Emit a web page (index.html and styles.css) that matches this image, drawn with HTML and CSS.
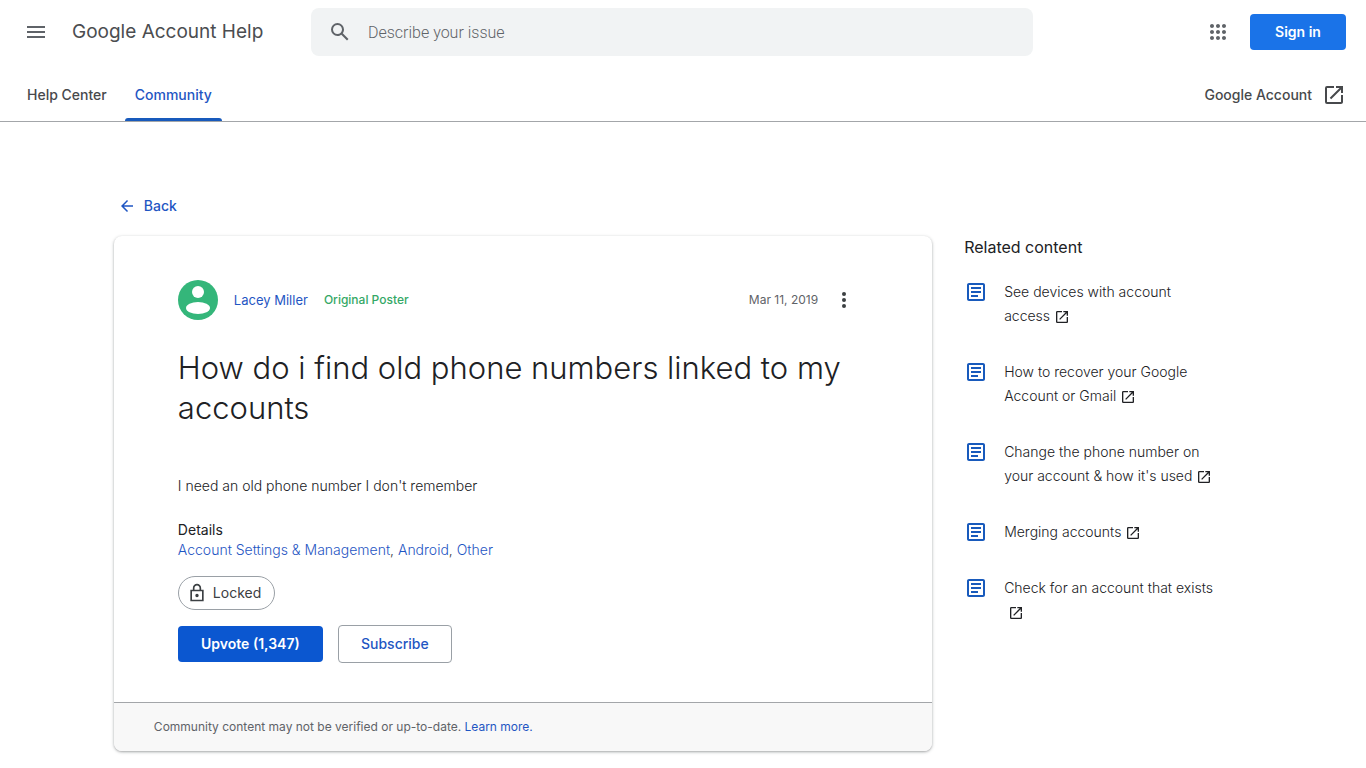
FILE: index.html
```html
<!DOCTYPE html>
<html lang="en">
<head>
    <meta charset="UTF-8">
    <meta name="viewport" content="width=device-width, initial-scale=1.0">
    <title>How do i find old phone numbers linked to my accounts - Google Account Community</title>
    <link rel="stylesheet" href="styles.css">
</head>
<body>
    <!-- Shared icons -->
    <svg class="sprite" aria-hidden="true">
        <symbol id="icon-open" viewBox="0 0 24 24">
            <path d="M19 19H5V5h7V3H5a2 2 0 0 0-2 2v14a2 2 0 0 0 2 2h14c1.1 0 2-.9 2-2v-7h-2v7zM14 3v2h3.590l-9.830 9.830 1.410 1.410L19 6.410V10h2V3h-7z"/>
        </symbol>
        <symbol id="icon-article" viewBox="0 0 24 24">
            <path d="M19 5v14H5V5h14m0-2H5c-1.100 0-2 .9-2 2v14c0 1.100.9 2 2 2h14c1.100 0 2-.9 2-2V5c0-1.100-.9-2-2-2zM14 17H7v-2h7v2zm3-4H7v-2h10v2zm0-4H7V7h10v2z"/>
        </symbol>
    </svg>

    <header class="header">
        <div class="top-bar">
            <div class="brand">
                <button class="icon-btn" aria-label="Main menu">
                    <svg viewBox="0 0 24 24" width="24" height="24"><path d="M3 18h18v-2H3v2zm0-5h18v-2H3v2zm0-7v2h18V6H3z"/></svg>
                </button>
                <a class="brand-name" href="#">Google Account Help</a>
            </div>
            <form class="search">
                <button class="icon-btn" type="button" aria-label="Search">
                    <svg viewBox="0 0 24 24" width="24" height="24"><path d="M20.490 19l-5.730-5.730C15.530 12.200 16 10.910 16 9.500A6.500 6.500 0 1 0 9.500 16c1.410 0 2.700-.47 3.770-1.240L19 20.490 20.490 19zM5 9.500C5 7.010 7.010 5 9.500 5S14 7.010 14 9.500 11.990 14 9.500 14 5 11.990 5 9.500z"/></svg>
                </button>
                <input type="text" placeholder="Describe your issue" aria-label="Describe your issue">
            </form>
            <div class="account">
                <button class="icon-btn" aria-label="Google apps">
                    <svg viewBox="0 0 24 24" width="24" height="24"><path d="M6 8c1.100 0 2-.9 2-2s-.9-2-2-2-2 .9-2 2 .9 2 2 2zm6 12c1.100 0 2-.9 2-2s-.9-2-2-2-2 .9-2 2 .9 2 2 2zm-6 0c1.100 0 2-.9 2-2s-.9-2-2-2-2 .9-2 2 .9 2 2 2zm0-6c1.100 0 2-.9 2-2s-.9-2-2-2-2 .9-2 2 .9 2 2 2zm6 0c1.100 0 2-.9 2-2s-.9-2-2-2-2 .9-2 2 .9 2 2 2zm4-8c0 1.100.9 2 2 2s2-.9 2-2-.9-2-2-2-2 .9-2 2zm-4 2c1.100 0 2-.9 2-2s-.9-2-2-2-2 .9-2 2 .9 2 2 2zm6 6c1.100 0 2-.9 2-2s-.9-2-2-2-2 .9-2 2 .9 2 2 2zm0 6c1.100 0 2-.9 2-2s-.9-2-2-2-2 .9-2 2 .9 2 2 2z"/></svg>
                </button>
                <a class="btn btn-signin" href="#">Sign in</a>
            </div>
        </div>
        <nav class="tabs">
            <a class="tab" href="#">Help Center</a>
            <a class="tab active" href="#">Community</a>
            <a class="tab tab-external" href="#">Google Account <svg width="24" height="24"><use href="#icon-open"/></svg></a>
        </nav>
    </header>

    <main class="page">
        <a class="back" href="#">
            <svg viewBox="0 0 24 24" width="18" height="18"><path d="M20 11H7.830l5.590-5.590L12 4l-8 8 8 8 1.410-1.410L7.830 13H20v-2z"/></svg>
            Back
        </a>

        <div class="columns">
            <article class="card">
                <div class="thread">
                    <div class="author">
                        <svg class="avatar" viewBox="0 0 40 40" width="40" height="40">
                            <circle class="avatar-bg" cx="20" cy="20" r="20"/>
                            <circle cx="20" cy="12" r="6"/>
                            <ellipse cx="20" cy="28" rx="12" ry="6"/>
                        </svg>
                        <a class="author-name" href="#">Lacey Miller</a>
                        <span class="author-role">Original Poster</span>
                        <span class="date">Mar 11, 2019</span>
                        <button class="icon-btn" aria-label="More options">
                            <svg viewBox="0 0 24 24" width="24" height="24"><circle cx="12" cy="6" r="2"/><circle cx="12" cy="12" r="2"/><circle cx="12" cy="18" r="2"/></svg>
                        </button>
                    </div>

                    <h1>How do i find old phone numbers linked to my accounts</h1>
                    <p class="message">I need an old phone number I don't remember</p>

                    <div class="details">
                        <div class="details-title">Details</div>
                        <div class="details-links"><a href="#">Account Settings &amp; Management</a>, <a href="#">Android</a>, <a href="#">Other</a></div>
                    </div>

                    <div class="chip">
                        <svg viewBox="0 0 24 24" width="20" height="20"><path d="M18 8h-1V6c0-2.760-2.240-5-5-5S7 3.240 7 6v2H4v14h16V8h-2zM9 6c0-1.660 1.340-3 3-3s3 1.340 3 3v2H9V6zm9 14H6V10h12v10zm-6-3c1.100 0 2-.9 2-2s-.9-2-2-2-2 .9-2 2 .9 2 2 2z"/></svg>
                        Locked
                    </div>

                    <div class="actions">
                        <button class="btn btn-upvote">Upvote (1,347)</button>
                        <button class="btn btn-subscribe">Subscribe</button>
                    </div>
                </div>
                <div class="notice">Community content may not be verified or up-to-date. <a href="#">Learn more.</a></div>
            </article>

            <aside class="related">
                <h2>Related content</h2>
                <ul>
                    <li>
                        <svg class="article-icon" width="24" height="24"><use href="#icon-article"/></svg>
                        <a href="#">See devices with account access<svg class="open-icon" width="16" height="16"><use href="#icon-open"/></svg></a>
                    </li>
                    <li>
                        <svg class="article-icon" width="24" height="24"><use href="#icon-article"/></svg>
                        <a href="#">How to recover your Google Account or Gmail<svg class="open-icon" width="16" height="16"><use href="#icon-open"/></svg></a>
                    </li>
                    <li>
                        <svg class="article-icon" width="24" height="24"><use href="#icon-article"/></svg>
                        <a href="#">Change the phone number on your account &amp; how it's used<svg class="open-icon" width="16" height="16"><use href="#icon-open"/></svg></a>
                    </li>
                    <li>
                        <svg class="article-icon" width="24" height="24"><use href="#icon-article"/></svg>
                        <a href="#">Merging accounts<svg class="open-icon" width="16" height="16"><use href="#icon-open"/></svg></a>
                    </li>
                    <li>
                        <svg class="article-icon" width="24" height="24"><use href="#icon-article"/></svg>
                        <a href="#">Check for an account that exists<svg class="open-icon" width="16" height="16"><use href="#icon-open"/></svg></a>
                    </li>
                </ul>
            </aside>
        </div>
    </main>
</body>
</html>
```
FILE: styles.css
```css
* {
    box-sizing: border-box;
}
body {
    font-family: Inter, Roboto, sans-serif;
    font-size: 14px;
    line-height: 20px;
    color: #3c4043;
    background-color: #fff;
    margin: 0;
}
a {
    color: #1f56c3;
    text-decoration: none;
}
svg {
    fill: currentColor;
    flex-shrink: 0;
}
button {
    font-family: inherit;
    cursor: pointer;
}
.sprite {
    display: block;
    width: 0;
    height: 0;
}
.icon-btn {
    display: flex;
    padding: 0;
    border: none;
    background: none;
    color: #5f6368;
}

/* Header */
.header {
    border-bottom: 1px solid #a3a6a9;
}
.top-bar {
    display: flex;
    align-items: center;
    height: 64px;
    padding: 0 20px 0 24px;
}
.brand {
    display: flex;
    align-items: center;
    gap: 24px;
    width: 287px;
}
.brand-name {
    font-size: 19px;
    line-height: 24px;
    color: #4b4d50;
    white-space: nowrap;
}
.search {
    display: flex;
    align-items: center;
    flex: 1;
    gap: 16px;
    max-width: 722px;
    height: 48px;
    padding: 0 17px;
    background-color: #f1f3f4;
    border-radius: 8px;
}
.search input {
    flex: 1;
    min-width: 0;
    border: none;
    outline: none;
    padding: 0;
    background: none;
    font-family: Roboto, sans-serif;
    font-size: 16px;
    font-weight: 300;
    color: #202124;
}
.search input::placeholder {
    color: #5f6368;
}
.account {
    display: flex;
    align-items: center;
    gap: 20px;
    margin-left: auto;
}
.tabs {
    display: flex;
    padding: 0 20px 0 17px;
    gap: 8px;
}
.tab {
    display: flex;
    align-items: center;
    position: relative;
    height: 57px;
    padding: 5px 10px 0;
    font-weight: 500;
    color: #47494c;
}
.tab.active {
    color: #1f56c3;
}
.tab.active::after {
    content: "";
    position: absolute;
    left: 0;
    right: 0;
    bottom: 0;
    height: 3px;
    border-radius: 3px 3px 0 0;
    background-color: #185abc;
}
.tab-external {
    margin-left: auto;
    padding-right: 0;
    gap: 10px;
}

/* Page */
.page {
    width: 83.33%;
    margin: 0 auto;
    padding: 72px 0 16px;
}
.back {
    display: inline-flex;
    align-items: center;
    gap: 8px;
    padding: 2px 4px;
    font-weight: 500;
}
.columns {
    display: grid;
    grid-template-columns: 1fr 256px;
    gap: 32px;
    align-items: start;
    padding: 16px 32px 0 0;
}
.card {
    border-radius: 8px;
    box-shadow: 0 1px 2px rgba(60, 64, 67, 0.3), 0 1px 3px 1px rgba(60, 64, 67, 0.15);
    overflow: hidden;
}
.thread {
    padding: 44px 64px 39px;
}
.author {
    display: flex;
    align-items: center;
    margin-right: 12px;
    font-size: 13px;
}
.avatar {
    margin-right: 16px;
    fill: #fff;
}
.avatar-bg {
    fill: #34b67a;
}
.author-role {
    margin-left: 16px;
    font-size: 12px;
    color: #34a866;
    font-weight: 500;
}
.date {
    margin-left: auto;
    margin-right: 14px;
    font-size: 12px;
    color: #5f6368;
}
.author .icon-btn {
    color: #3c4043;
}
h1 {
    margin: 28px 0 48px;
    font-size: 31px;
    line-height: 40px;
    font-weight: 300;
    color: #202124;
}
.message {
    margin: 0;
    font-weight: 300;
    color: #202124;
}
.details {
    margin: 24px 0 16px;
}
.details-title {
    color: #202124;
}
.details-links {
    font-weight: 300;
}
.chip {
    display: inline-flex;
    align-items: center;
    gap: 6px;
    height: 34px;
    padding: 0 13px 0 8px;
    border: 1px solid #9aa0a6;
    border-radius: 17px;
}
.actions {
    display: flex;
    align-items: center;
    gap: 15px;
    margin-top: 15px;
}
.btn {
    padding: 8px 22px;
    border: none;
    border-radius: 4px;
    font-size: 14px;
    line-height: 20px;
    font-weight: 600;
    color: #fff;
    text-align: center;
}
.btn-signin {
    min-width: 96px;
    background-color: #1a73e8;
}
.btn-upvote {
    min-width: 145px;
    background-color: #0b57d0;
}
.btn-subscribe {
    min-width: 114px;
    border: 1px solid #9aa0a6;
    background-color: #fff;
    color: #1f56c3;
    font-weight: 500;
}
.notice {
    padding: 14px 40px;
    border-top: 1px solid #a3a6a9;
    background-color: #f8f8f8;
    font-size: 12px;
    color: #5f6368;
}

/* Related content */
.related h2 {
    margin: 0 0 21px;
    font-size: 16px;
    line-height: 23px;
    font-weight: 400;
    color: #202124;
}
.related ul {
    list-style: none;
    margin: 0;
    padding: 0;
}
.related li {
    display: flex;
    gap: 16px;
    margin-bottom: 32px;
    line-height: 24px;
}
.related li a {
    max-width: 216px;
    font-weight: 300;
    color: #202124;
}
.article-icon {
    color: #185abc;
}
.open-icon {
    margin-left: 4px;
    vertical-align: middle;
    color: #202124;
}
```
